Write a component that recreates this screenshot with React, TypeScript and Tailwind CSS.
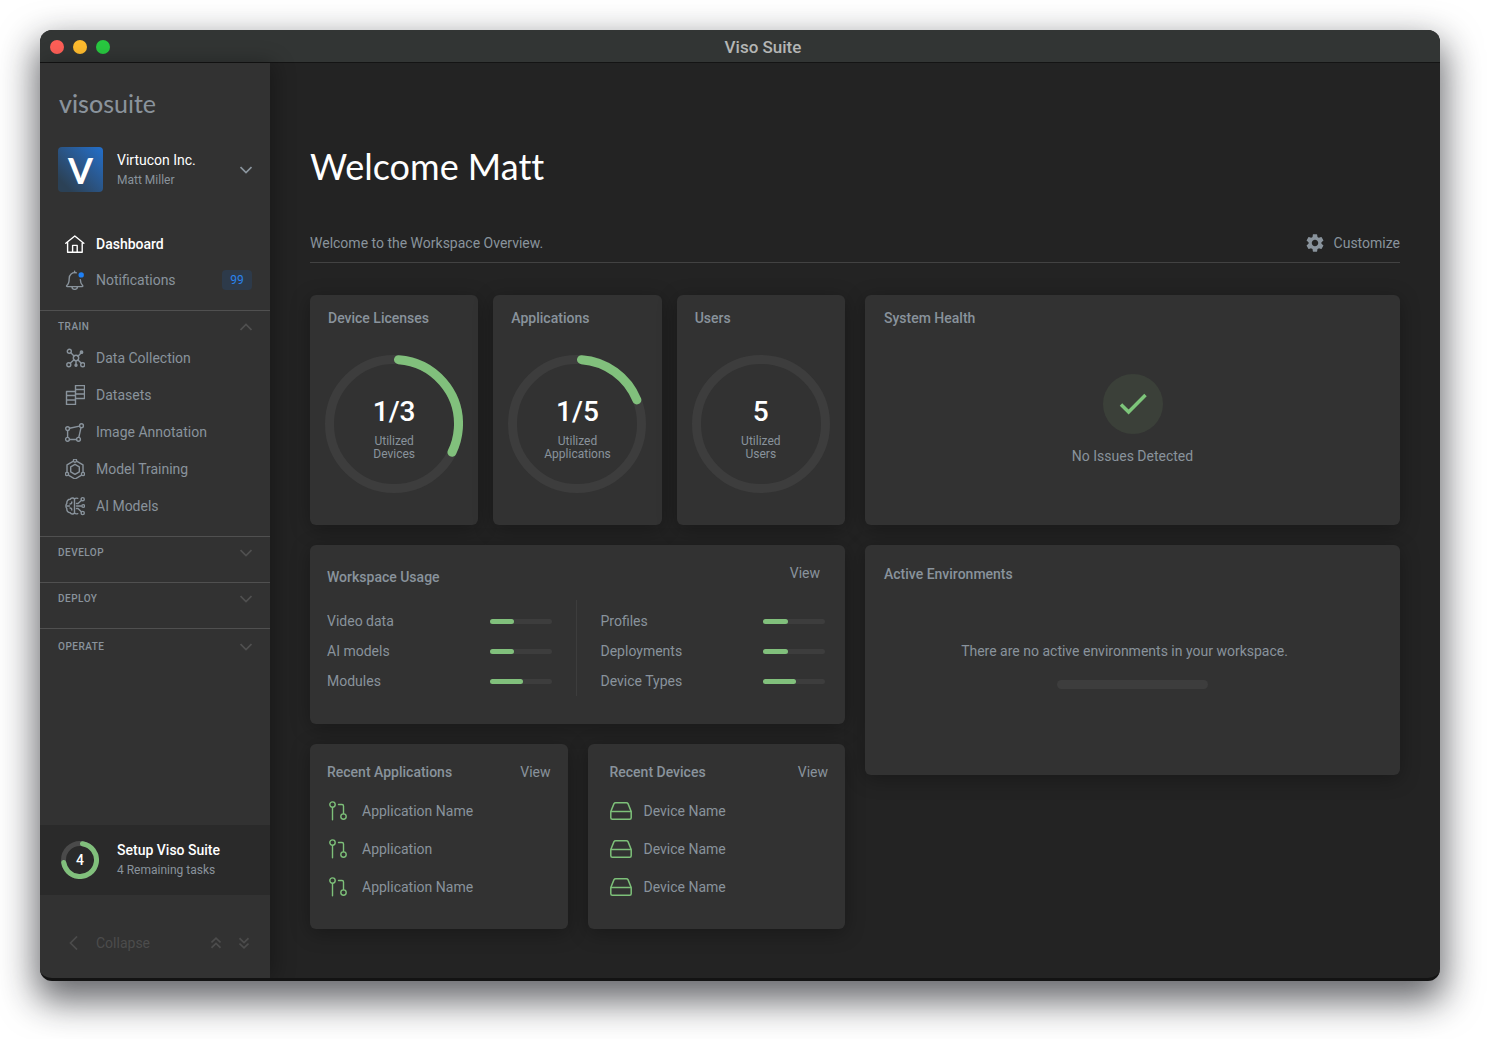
import React from 'react';
import clsx from 'clsx';

interface IconProps {
  className?: string;
}

interface NavEntry {
  label: string;
  icon: React.ComponentType<IconProps>;
}

interface Usage {
  label: string;
  percent: number;
}

function IconBase({ className, children }: IconProps & { children: React.ReactNode }) {
  return (
    <svg
      viewBox="0 0 20 20"
      className={clsx('w-5 h-5 shrink-0', className)}
      fill="none"
      stroke="currentColor"
      strokeWidth="1.4"
      strokeLinecap="round"
      strokeLinejoin="round"
      aria-hidden="true"
    >
      {children}
    </svg>
  );
}

const HomeIcon = ({ className }: IconProps) => (
  <IconBase className={className}>
    <path d="M.8 9.2 9.8 2l9 7.2M2.6 8v10.2h14.6V8M7.6 18v-6.6h4.6V18" />
  </IconBase>
);

const BellIcon = ({ className }: IconProps) => (
  <IconBase className={className}>
    <path d="M11.2 2.8C7 2 4.2 4.8 4.2 8.4c0 4-.6 5.600-2.400 7.200-.5.5-.2 1 .4 1h15c.6 0 .9-.5.4-1-1.500-1.500-2.200-3-2.300-6" />
    <path d="M9.600 2.600V1.200M7 16.800c0 3.400 5.400 3.400 5.400 0" />
    <circle cx="16.200" cy="4.900" r="2.700" fill="#1f80f5" stroke="none" />
  </IconBase>
);

const CollectionIcon = ({ className }: IconProps) => (
  <IconBase className={className}>
    <circle cx="11" cy="10" r="2.700" />
    <circle cx="4.300" cy="3.300" r="2" />
    <circle cx="3.800" cy="16.800" r="2" />
    <circle cx="17.700" cy="16.800" r="2" />
    <circle cx="16.500" cy="4.200" r="1.200" fill="currentColor" />
    <circle cx="11" cy="17.300" r="1" fill="currentColor" />
    <path d="m5.800 4.800 3.200 3.300M13 8.200l2.800-3M5.200 15.300l3.800-3.500M11 12.800v3.700M13 11.900l3.300 3.400" />
  </IconBase>
);

const DatasetsIcon = ({ className }: IconProps) => (
  <IconBase className={className}>
    <path d="M1.500 6.500h9v13h-9zM1.500 10.500h9M1.500 15h9" />
    <path d="M10.500 13.500h9v-13h-9v6M10.500 4.500h9M10.500 9h9" />
  </IconBase>
);

const AnnotationIcon = ({ className }: IconProps) => (
  <IconBase className={className}>
    <circle cx="2.600" cy="6.600" r="1.900" />
    <circle cx="16.500" cy="3.700" r="1.900" />
    <circle cx="2.500" cy="17.300" r="1.900" />
    <circle cx="13.500" cy="17.300" r="1.900" />
    <path d="m4.600 6.200 9.900-2.100M2.600 8.600v6.700M4.500 17.500h7M16 5.700l-2.200 9.600" />
  </IconBase>
);

const TrainingIcon = ({ className }: IconProps) => (
  <IconBase className={className}>
    <path d="M7.600 2.600 2 5.900v7M12.400 2.600 18 5.900v7M3.800 16.400 10 20l6.200-3.600" />
    <path d="m10 5.300 4.300 2.500v5L10 15.400l-4.300-2.600v-5z" />
    <circle cx="10" cy="1.600" r="1.600" />
    <circle cx="2" cy="15" r="1.600" />
    <circle cx="18" cy="15" r="1.600" />
  </IconBase>
);

const ModelsIcon = ({ className }: IconProps) => (
  <IconBase className={className}>
    <path d="M9.500 3C8.500 1.500 6 1.800 5.200 3.300 3 3.300 1.500 5 1.900 7.200.8 8.800.8 11.200 1.900 12.800 1.500 15 3 16.700 5.200 16.700 6 18.200 8.500 18.500 9.500 17zM9.500 3c1-.9 2.200-1 3.200-.6M9.500 17c1 .9 2.200 1 3.200.6" />
    <path d="M2 10h2.500M6.800 6c0 1.200-.6 2-1.800 2M6.800 14c0-1.200-.6-2-1.800-2M11.500 7.500H13l3.300-3M11.500 10H16M11.500 12.500H13l3.300 3.300" />
    <circle cx="17.700" cy="3.200" r="1.600" />
    <circle cx="18.200" cy="10" r="1.400" />
    <circle cx="17.700" cy="17" r="1.600" />
  </IconBase>
);

const BranchIcon = ({ className }: IconProps) => (
  <IconBase className={className}>
    <circle cx="3.500" cy="3.600" r="2.700" />
    <circle cx="14.500" cy="15.600" r="2.700" />
    <path d="M3.500 6.600v12.200M9.500 3.500H13c1 0 1.500.6 1.500 1.600v7.400" />
  </IconBase>
);

const DriveIcon = ({ className }: IconProps) => (
  <svg
    viewBox="0 0 22 20"
    className={className}
    fill="none"
    stroke="currentColor"
    strokeWidth="1.500"
    strokeLinejoin="round"
    aria-hidden="true"
  >
    <path d="M.8 10.500v6.300c0 .9.600 1.500 1.500 1.500h17.400c.9 0 1.500-.6 1.500-1.500v-6.300L18 2.600c-.4-.7-.8-.9-1.600-.9H5.600c-.8 0-1.200.2-1.600.9zM.8 10.500h20.400" />
  </svg>
);

const GearIcon = ({ className }: IconProps) => (
  <svg viewBox="2 2 20 20" className={className} fill="currentColor" aria-hidden="true">
    <path d="M19.140 12.940c.040-.3.060-.610.060-.940 0-.320-.020-.640-.070-.940l2.030-1.580a.49.49 0 0 0 .120-.610l-1.920-3.320a.488.488 0 0 0-.590-.220l-2.390.960c-.5-.380-1.030-.7-1.620-.940l-.360-2.540a.484.484 0 0 0-.480-.410h-3.840c-.240 0-.430.170-.470.410l-.360 2.540c-.590.240-1.130.570-1.620.940l-2.390-.960c-.220-.080-.470 0-.590.220L2.740 8.870c-.120.210-.080.470.120.610l2.030 1.580c-.050.3-.090.630-.090.940s.020.640.070.940l-2.030 1.580a.49.49 0 0 0-.120.610l1.920 3.320c.120.220.370.290.590.220l2.390-.960c.5.380 1.030.7 1.620.940l.360 2.540c.050.240.240.410.480.410h3.840c.240 0 .440-.170.470-.410l.360-2.540c.590-.240 1.130-.560 1.620-.940l2.390.960c.220.080.470 0 .590-.220l1.920-3.320c.120-.220.070-.470-.120-.610zM12 15.600c-1.980 0-3.600-1.620-3.600-3.600s1.620-3.600 3.600-3.600 3.600 1.620 3.600 3.600-1.620 3.600-3.600 3.600" />
  </svg>
);

function Chevron({ up, className }: { up?: boolean; className?: string }) {
  return (
    <svg viewBox="0 0 12 8" className={clsx('w-3 h-2', className)} fill="none" stroke="currentColor" strokeWidth="1.700" aria-hidden="true">
      <path d={up ? 'M.5 7 6 1.500 11.500 7' : 'M.5 1 6 6.500 11.500 1'} />
    </svg>
  );
}

function DoubleChevron({ up }: { up?: boolean }) {
  return (
    <svg viewBox="0 0 10 12" className="w-2.5 h-3" fill="none" stroke="currentColor" strokeWidth="1.700" aria-hidden="true">
      <path d={up ? 'M.5 5.500 5 1.200l4.500 4.300M.5 10.800 5 6.500l4.500 4.300' : 'M.5 1.200 5 5.500l4.500-4.300M.5 6.500 5 10.800l4.500-4.300'} />
    </svg>
  );
}

// Progress ring with round caps, drawn clockwise from the top
function Ring({ size, stroke, value, track }: { size: number; stroke: number; value: number; track: string }) {
  const c = size / 2;
  const r = (size - stroke) / 2;
  const cap = (stroke / 2 / r) * (180 / Math.PI);
  return (
    <svg width={size} height={size} viewBox={`0 0 ${size} ${size}`} fill="none" aria-hidden="true">
      <circle cx={c} cy={c} r={r} stroke={track} strokeWidth={stroke} />
      {value > 0 && (
        <circle
          cx={c}
          cy={c}
          r={r}
          stroke="#81c07c"
          strokeWidth={stroke}
          strokeLinecap="round"
          pathLength={360}
          strokeDasharray={`${value * 360 - cap * 2} 360`}
          transform={`rotate(${cap - 90} ${c} ${c})`}
        />
      )}
    </svg>
  );
}

const trainItems: NavEntry[] = [
  { label: 'Data Collection', icon: CollectionIcon },
  { label: 'Datasets', icon: DatasetsIcon },
  { label: 'Image Annotation', icon: AnnotationIcon },
  { label: 'Model Training', icon: TrainingIcon },
  { label: 'AI Models', icon: ModelsIcon },
];

const usageLeft: Usage[] = [
  { label: 'Video data', percent: 40 },
  { label: 'AI models', percent: 40 },
  { label: 'Modules', percent: 54 },
];

const usageRight: Usage[] = [
  { label: 'Profiles', percent: 40 },
  { label: 'Deployments', percent: 40 },
  { label: 'Device Types', percent: 54 },
];

function SectionHeader({ label, open }: { label: string; open?: boolean }) {
  return (
    <button className="w-full h-7 px-[18px] pt-1 flex items-center justify-between">
      <span className="text-[10px] leading-6 font-medium tracking-wider uppercase">{label}</span>
      <Chevron up={open} className="text-[#505050]" />
    </button>
  );
}

function Sidebar() {
  return (
    <aside className="w-[230px] shrink-0 flex flex-col bg-[#323232] shadow-[4px_0_20px_rgba(0,0,0,0.3)]">
      <div className="pt-[22px] pl-[19px] text-[25px] leading-9 font-medium text-[#8a939c] font-[Lato,sans-serif]">
        viso<span className="font-normal">suite</span>
      </div>

      <button className="mt-[26px] px-[18px] flex items-center text-left">
        <span className="w-[45px] h-[45px] rounded bg-linear-to-tr from-[#2b4156] from-15% to-[#226fcb] flex items-center justify-center text-4xl font-bold text-white font-[Lato,sans-serif]">
          V
        </span>
        <span className="ml-3.5 flex-1">
          <span className="block text-sm leading-5 text-white">Virtucon Inc.</span>
          <span className="block text-xs leading-5">Matt Miller</span>
        </span>
        <Chevron />
      </button>

      <nav className="mt-[34px] flex flex-col">
        <a href="#dashboard" className="h-9 pl-[25px] flex items-center gap-[11px] font-medium text-white">
          <HomeIcon />
          Dashboard
        </a>
        <a href="#notifications" className="h-9 pl-[25px] pr-[18px] flex items-center gap-[11px]">
          <BellIcon />
          <span className="flex-1">Notifications</span>
          <span className="w-[30px] h-5 rounded-sm bg-[#2d3a4a] text-[#2a83ec] text-xs leading-5 text-center">99</span>
        </a>

        <div className="mt-3 border-t border-[#505050] pb-3">
          <SectionHeader label="Train" open />
          {trainItems.map(({ label, icon: Icon }) => (
            <a key={label} href="#train" className="h-[37px] pl-[25px] flex items-center gap-[11px]">
              <Icon />
              {label}
            </a>
          ))}
        </div>
        <div className="h-[46px] border-t border-[#505050]">
          <SectionHeader label="Develop" />
        </div>
        <div className="h-[46px] border-t border-[#505050]">
          <SectionHeader label="Deploy" />
        </div>
        <div className="h-[46px] pt-0.5 border-t border-[#505050]">
          <SectionHeader label="Operate" />
        </div>
      </nav>

      <div className="mt-auto h-[70px] pl-[21px] flex items-center bg-[#2a2a2a]">
        <div className="grid place-items-center *:[grid-area:1/1]">
          <Ring size={38} stroke={5} value={0.75} track="#4a4a4a" />
          <span className="text-sm font-medium text-white">4</span>
        </div>
        <div className="ml-[18px]">
          <p className="leading-5 font-medium text-white">Setup Viso Suite</p>
          <p className="text-xs leading-5">4 Remaining tasks</p>
        </div>
      </div>

      <div className="mt-8 mb-[19px] h-8 pl-[29px] pr-[21px] flex items-center text-[#4c4c4c]">
        <button className="flex-1 flex items-center gap-[18px]">
          <svg viewBox="0 0 9 14" className="w-[9px] h-3.5" fill="none" stroke="currentColor" strokeWidth="1.700" aria-hidden="true">
            <path d="M8 .5 1.500 7 8 13.500" />
          </svg>
          Collapse
        </button>
        <button aria-label="Collapse all sections">
          <DoubleChevron up />
        </button>
        <button className="ml-[18px]" aria-label="Expand all sections">
          <DoubleChevron />
        </button>
      </div>
    </aside>
  );
}

function Card({ className, children }: { className?: string; children: React.ReactNode }) {
  return (
    <section className={clsx('rounded-md bg-[#323232] shadow-[0_4px_20px_rgba(0,0,0,0.3)]', className)}>
      {children}
    </section>
  );
}

function GaugeCard({ title, value, caption, ratio }: { title: string; value: string; caption: string; ratio: number }) {
  return (
    <Card className="h-[230px] pt-[13px]">
      <h2 className="pl-[18px] leading-5 font-medium">{title}</h2>
      <div className="mt-[27px] grid place-items-center *:[grid-area:1/1]">
        <Ring size={138} stroke={9} value={ratio} track="#3d3d3d" />
        <div className="pt-[9px] text-center">
          <p className="text-[28px] leading-8 font-medium text-white">{value}</p>
          <p className="mt-[7px] text-xs leading-[13px]">
            Utilized
            <br />
            {caption}
          </p>
        </div>
      </div>
    </Card>
  );
}

function UsageList({ items }: { items: Usage[] }) {
  return (
    <ul className="flex-1 pt-1.5">
      {items.map((item) => (
        <li key={item.label} className="h-[30px] flex items-center justify-between">
          {item.label}
          <div
            role="progressbar"
            aria-label={item.label}
            aria-valuenow={item.percent}
            className="w-[62px] h-[5px] rounded-full bg-[#3d3d3d]"
          >
            <div className="h-full rounded-full bg-[#81c07c]" style={{ width: `${item.percent}%` }} />
          </div>
        </li>
      ))}
    </ul>
  );
}

export default function App() {
  return (
    <div className="min-h-screen bg-white pt-[30px] pl-10 pr-[47px] pb-[58px] flex flex-col text-sm text-[#89939c] font-[Roboto,sans-serif]">
      <div className="flex-1 flex flex-col rounded-xl overflow-hidden bg-[#232323] border-b-3 border-[#131313] shadow-[0_16px_36px_4px_rgba(20,22,28,0.65)]">
        {/* Title bar */}
        <header className="h-[33px] pl-2.5 pr-6 pt-px flex items-center bg-[#323534] border-b border-[#141414]">
          <div className="flex gap-[9px]">
            <button aria-label="Close" className="w-3.5 h-3.5 rounded-full bg-[#fe5f57]" />
            <button aria-label="Minimize" className="w-3.5 h-3.5 rounded-full bg-[#febc2e]" />
            <button aria-label="Zoom" className="w-3.5 h-3.5 rounded-full bg-[#28c840]" />
          </div>
          <div className="flex-1 text-center text-[17px] leading-6 font-medium text-[#b4b6b5]">Viso Suite</div>
        </header>

        <div className="flex-1 flex">
          <Sidebar />

          <main className="flex-1 min-w-0 px-10 pt-[79px] pb-12">
            <h1 className="text-4xl leading-12 text-white font-[Lato,sans-serif] [font-variant-ligatures:none]">Welcome Matt</h1>

            <div className="mt-[43px] pb-[9px] flex items-center justify-between border-b border-[#424242]">
              <p className="leading-5">Welcome to the Workspace Overview.</p>
              <button className="h-5 flex items-center gap-2.5">
                <GearIcon className="w-[18px] h-[18px]" />
                Customize
              </button>
            </div>

            <div className="mt-8 grid grid-cols-2 gap-5 items-start">
              <div className="flex flex-col gap-5">
                <div className="grid grid-cols-3 gap-[15px]">
                  <GaugeCard title="Device Licenses" value="1/3" caption="Devices" ratio={1 / 3} />
                  <GaugeCard title="Applications" value="1/5" caption="Applications" ratio={1 / 5} />
                  <GaugeCard title="Users" value="5" caption="Users" ratio={0} />
                </div>

                <Card className="pt-[18px] pb-7 pl-[17px] pr-5">
                  <div className="flex items-start justify-between">
                    <h2 className="pt-1 leading-5 font-medium">Workspace Usage</h2>
                    <a href="#usage" className="pr-[5px] leading-5">View</a>
                  </div>
                  <div className="mt-[13px] flex">
                    <UsageList items={usageLeft} />
                    <div className="w-px mx-6 bg-[#3d3d3d]" />
                    <UsageList items={usageRight} />
                  </div>
                </Card>

                <div className="grid grid-cols-2 gap-5">
                  <Card className="pt-[18px] pb-[23px] px-[17px]">
                    <div className="flex justify-between leading-5">
                      <h2 className="font-medium">Recent Applications</h2>
                      <a href="#applications">View</a>
                    </div>
                    <ul className="mt-2.5">
                      {['Application Name', 'Application', 'Application Name'].map((name, i) => (
                        <li key={i} className="h-[38px] pl-0.5 flex items-center gap-[13px]">
                          <BranchIcon className="text-[#7dc079]" />
                          {name}
                        </li>
                      ))}
                    </ul>
                  </Card>
                  <Card className="pt-[18px] pb-[23px] pl-[22px] pr-[17px]">
                    <div className="flex justify-between leading-5">
                      <h2 className="font-medium">Recent Devices</h2>
                      <a href="#devices">View</a>
                    </div>
                    <ul className="mt-2.5">
                      {['Device Name', 'Device Name', 'Device Name'].map((name, i) => (
                        <li key={i} className="h-[38px] flex items-center gap-3">
                          <DriveIcon className="w-[22px] h-5 text-[#7dc079]" />
                          {name}
                        </li>
                      ))}
                    </ul>
                  </Card>
                </div>
              </div>

              <div className="flex flex-col gap-5">
                <Card className="h-[230px] pt-[13px] px-[19px]">
                  <h2 className="leading-5 font-medium">System Health</h2>
                  <div className="mt-[46px] flex flex-col items-center gap-3">
                    <div className="w-[60px] h-[60px] rounded-full bg-[#3b4039] flex items-center justify-center text-[#7dc57a]">
                      <svg viewBox="0 0 28 22" className="w-7 h-[22px]" fill="none" stroke="currentColor" strokeWidth="3.500" aria-hidden="true">
                        <path d="m2 11.500 7.600 7.500L26.500 2" />
                      </svg>
                    </div>
                    <p className="leading-5">No Issues Detected</p>
                  </div>
                </Card>

                <Card className="h-[230px] pt-[19px] px-[19px]">
                  <h2 className="leading-5 font-medium">Active Environments</h2>
                  <div className="mt-[57px] flex flex-col items-center gap-[19px]">
                    <p className="pr-4 leading-5">There are no active environments in your workspace.</p>
                    <div className="w-[151px] h-[9px] rounded-full bg-[#3d3d3d]" />
                  </div>
                </Card>
              </div>
            </div>
          </main>
        </div>
      </div>
    </div>
  );
}
